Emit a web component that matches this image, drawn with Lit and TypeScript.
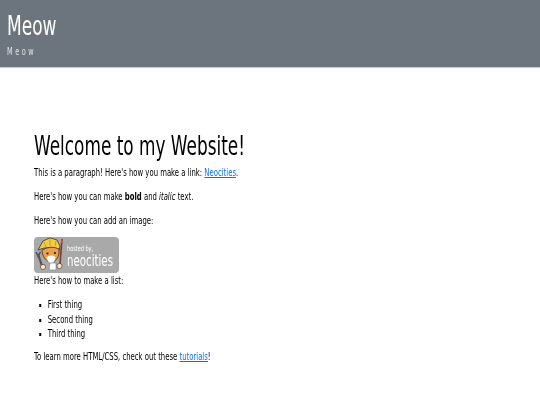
import { LitElement, html, css } from "lit";
import { customElement } from "lit/decorators.js";

@customElement("app-root")
export class AppRoot extends LitElement {
  static styles = css`
    :host {
      display: block;
      width: 540px;
      height: 405px;
      overflow: hidden;
      background: #fff;
      color: #000;
      font-family: "DejaVu Sans", sans-serif;
      font-size: 10.5px;
      line-height: 14px;
    }
    .squeeze { transform: scaleX(0.655); transform-origin: left top; width: 152%; filter: blur(0.3px); }
    .banner {
      background: #6c757d;
      color: #fff;
      height: 68px;
      box-sizing: border-box;
      padding: 11px 7px 0;
      border-bottom: 1px solid #c4c8cc;
    }
    .title { font-size: 26px; line-height: 30px; }
    .sub { margin-top: 4px; font-size: 10px; letter-spacing: 3.8px; line-height: 14px; color: #dfe2e4; }
    main { padding: 62px 0 0 34px; }
    h1 { margin: 0 0 3px; font-size: 25.8px; font-weight: 400; line-height: 32px; }
    p { margin: 0 0 10px; }
    a { color: #0d6efd; }
    i { font-style: oblique 14deg; }
    .badge { display: block; width: 85px; height: 36px; filter: blur(0.3px); }
    ul { margin: 10px 0 9px; padding: 0 0 0 21px; list-style: square; }
    li { margin-bottom: 0.5px; }
    .mark { font-family: "DejaVu Sans", sans-serif; fill: #fff; }
  `;

  render() {
    return html`
      <header class="banner">
        <div class="squeeze">
          <div class="title">Meow</div>
          <div class="sub">Meow</div>
        </div>
      </header>
      <main>
        <div class="squeeze">
          <h1>Welcome to my Website!</h1>
          <p>This is a paragraph! Here's how you make a link: <a href="#">Neocities</a>.</p>
          <p>Here's how you can make <b>bold</b> and <i>italic</i> text.</p>
          <p>Here's how you can add an image:</p>
        </div>
        <svg class="badge" viewBox="0 0 85 36" role="img" aria-label="hosted by neocities">
          <rect width="85" height="36" rx="4" fill="#a9a9a9" />
          <text class="mark" x="33" y="13.5" font-size="7.5" textLength="26" lengthAdjust="spacingAndGlyphs">hosted by,</text>
          <text class="mark" x="33" y="28.5" font-size="15.5" textLength="46" lengthAdjust="spacingAndGlyphs">neocities</text>
          <path d="M4 13 L9 4 L16 0.8 L23 3 L26 9 L25 14 Q15 8 4 13 Z" fill="#f3cb45" stroke="#333" stroke-width=".8" />
          <path d="M16 1 L16 9 M10 5 L12 10 M22 4 L21 9" stroke="#b88d22" stroke-width=".8" fill="none" />
          <path d="M8 13 Q8 22 17 26 Q26 23 25 12 Q17 8 8 13 Z" fill="#eea04a" stroke="#333" stroke-width=".8" />
          <path d="M12.5 20.5 Q17 17 21.5 20 Q21 26 17 26 Q14 26 12.5 20.5 Z" fill="#fff" />
          <circle cx="13.5" cy="16.5" r="1.1" fill="#222" />
          <circle cx="21" cy="16" r="1.1" fill="#222" />
          <path d="M16 26 L15 33 L22 33 L22 26 Z" fill="#fff" stroke="#666" stroke-width=".5" />
          <path d="M28 2 L26 27" stroke="#7d3a2c" stroke-width="1.6" />
          <path d="M28 1 L29 6 L26.8 6 Z" fill="#c9564a" />
          <path d="M4 17 L8 29" stroke="#555" stroke-width="2.2" />
          <path d="M2 15 L4 19 L6.5 15" fill="none" stroke="#555" stroke-width="1.6" />
          <circle cx="25.5" cy="29" r="2.6" fill="#f8e4c6" stroke="#333" stroke-width=".6" />
          <circle cx="9" cy="30" r="2.6" fill="#f8e4c6" stroke="#333" stroke-width=".6" />
        </svg>
        <div class="squeeze">
          <p>Here's how to make a list:</p>
          <ul>
            <li>First thing</li>
            <li>Second thing</li>
            <li>Third thing</li>
          </ul>
          <p>To learn more HTML/CSS, check out these <a href="#">tutorials</a>!</p>
        </div>
      </main>
    `;
  }
}
